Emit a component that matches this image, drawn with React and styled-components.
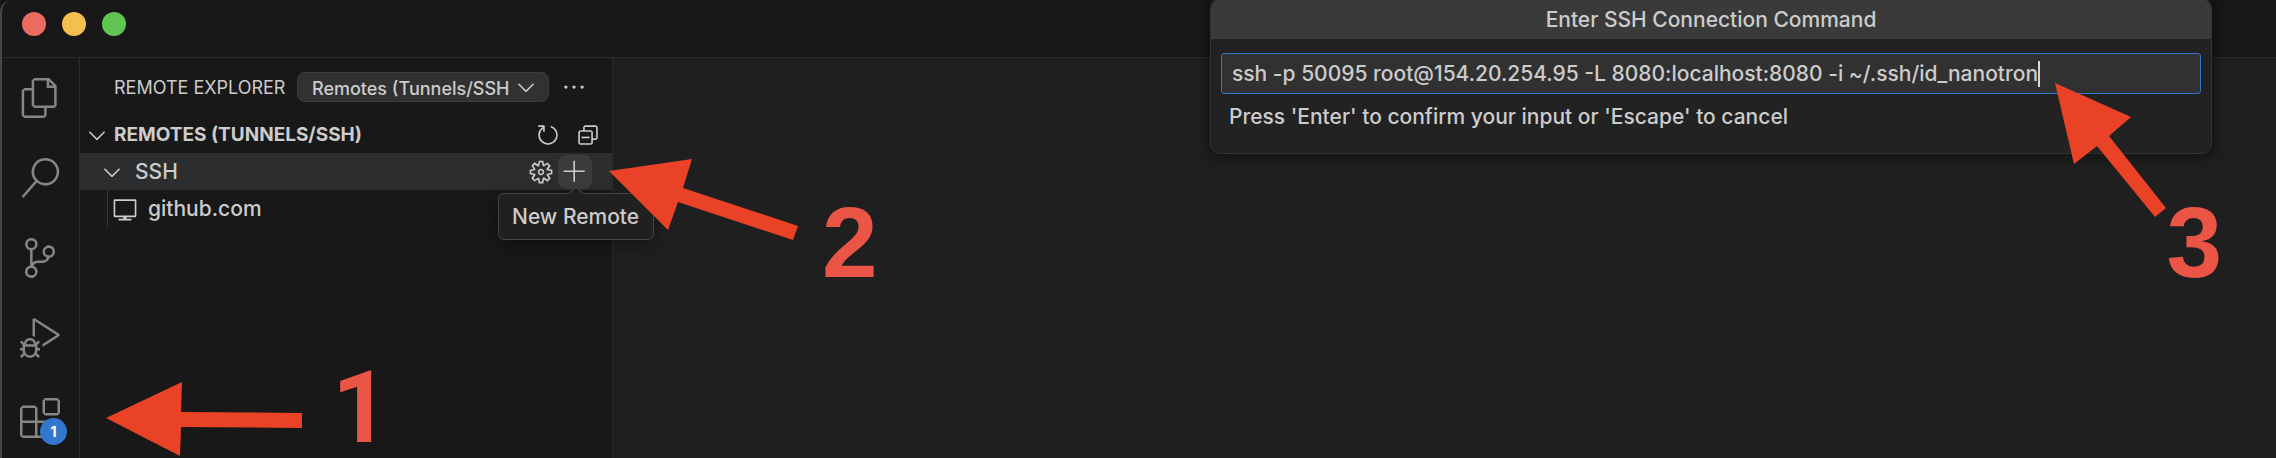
import React from 'react';
import styled, { createGlobalStyle } from 'styled-components';
import {
  VscFiles, VscSearch, VscSourceControl, VscDebugAlt, VscExtensions, VscRefresh,
  VscCollapseAll, VscGear, VscAdd, VscVm, VscChevronDown, VscEllipsis,
} from 'react-icons/vsc';

const GlobalStyle = createGlobalStyle`
  *, *::before, *::after { box-sizing: border-box; }
  body { margin: 0; background: #181818; }
  button, input, select { font: inherit; color: inherit; }
`;

const Window = styled.div`
  position: relative;
  display: flex;
  flex-direction: column;
  min-height: 100vh;
  overflow: hidden;
  background: #181818;
  color: #cccccc;
  font-family: Inter, 'Open Sans', sans-serif;
  font-size: 21px;
  font-weight: 500;
  line-height: 28px;
  border-left: 2px solid #464646;
  border-top-left-radius: 12px;
`;

const TitleBar = styled.header`
  display: flex;
  gap: 16px;
  height: 58px;
  padding: 12px 20px;
  border-bottom: 1px solid #2b2b2b;
`;

const TrafficLight = styled.button`
  width: 24px;
  height: 24px;
  padding: 0;
  border: 0;
  border-radius: 50%;
  background: ${(p) => p.$color};
`;

const Workbench = styled.div`
  flex: 1;
  display: flex;
`;

const ActivityBar = styled.nav`
  display: flex;
  flex-direction: column;
  flex: 0 0 78px;
  border-right: 1px solid #2b2b2b;
`;

const ActivityButton = styled.button`
  position: relative;
  display: flex;
  align-items: center;
  justify-content: center;
  width: 76px;
  height: 80px;
  padding: 0;
  border: 0;
  background: none;
  color: #868686;
  font-size: 40px;
`;

const Badge = styled.span`
  position: absolute;
  right: 11px;
  bottom: 13px;
  width: 27px;
  height: 27px;
  border-radius: 50%;
  background: #3376cd;
  color: #ffffff;
  font-size: 15px;
  font-weight: 700;
  line-height: 27px;
  text-align: center;
`;

const Sidebar = styled.aside`
  flex: 0 0 533px;
  border-right: 1px solid #2b2b2b;
`;

const SidebarHeader = styled.div`
  display: flex;
  align-items: center;
  height: 58px;
  padding-left: 34px;
`;

const SidebarTitle = styled.h1`
  flex: 0 0 183px;
  margin: 0;
  padding-top: 2px;
  font-size: 18px;
  font-weight: 400;
  white-space: nowrap;
`;

const SelectBox = styled.label`
  position: relative;
  flex: 0 0 252px;
  display: flex;
  align-items: center;
`;

const ViewSelect = styled.select`
  appearance: none;
  width: 100%;
  height: 30px;
  padding: 2px 36px 0 14px;
  border: 1px solid #3c3c3c;
  border-radius: 8px;
  background: #313131;
  font-size: 18px;
`;

const SelectArrow = styled.span`
  position: absolute;
  right: 10px;
  display: flex;
  font-size: 26px;
  pointer-events: none;
`;

const IconButton = styled.button`
  display: flex;
  align-items: center;
  justify-content: center;
  width: 34px;
  height: 34px;
  padding: 0;
  border: 0;
  border-radius: 8px;
  background: ${(p) => (p.$active ? '#3a3b3d' : 'none')};
  font-size: 26px;
`;

const MoreButton = styled(IconButton)`
  margin-left: 8px;
`;

const Row = styled.div`
  display: flex;
  align-items: center;
  height: 37px;
  padding-left: ${(p) => p.$indent}px;
  padding-right: ${(p) => p.$end || 0}px;
  background: ${(p) => (p.$hover ? '#2b2d2f' : 'none')};
`;

const Twisty = styled.span`
  display: flex;
  flex: 0 0 ${(p) => p.$width}px;
  font-size: 26px;
`;

const SectionTitle = styled.h2`
  flex: 1;
  margin: 0;
  font-size: 19px;
  font-weight: 700;
`;

const RowLabel = styled.span`
  flex: 1;
`;

const Actions = styled.div`
  display: flex;
  gap: ${(p) => p.$gap || 0}px;
`;

const TipAnchor = styled.div`
  position: relative;
`;

const Tooltip = styled.div`
  position: absolute;
  z-index: 2;
  top: 38px;
  left: -60px;
  padding: 9px 14px 9px 13px;
  height: 47px;
  border: 1px solid #454545;
  border-radius: 6px;
  background: #202020;
  box-shadow: 0 4px 16px rgba(0, 0, 0, 0.36);
  white-space: nowrap;

  &::before {
    content: '';
    position: absolute;
    top: -6px;
    left: 72px;
    width: 10px;
    height: 10px;
    border-top: 1px solid #454545;
    border-left: 1px solid #454545;
    background: #202020;
    transform: rotate(45deg);
  }
`;

const Children = styled.div`
  margin-left: 27px;
  border-left: 1px solid #383838;
`;

const Editor = styled.main`
  flex: 1;
  background: #1f1f1f;
`;

const QuickInput = styled.section`
  position: absolute;
  z-index: 1;
  top: -2px;
  right: 64px;
  width: 1002px;
  max-width: 90%;
  height: 156px;
  border: 1px solid #323232;
  border-radius: 10px;
  background: #222222;
  box-shadow: 0 0 14px 3px rgba(0, 0, 0, 0.4);
`;

const QuickTitle = styled.h2`
  margin: 0;
  height: 40px;
  padding-top: 7px;
  border-radius: 10px 10px 0 0;
  background: #3a3a3a;
  font-size: 21px;
  font-weight: 500;
  text-align: center;
`;

const CommandBox = styled.label`
  display: flex;
  align-items: center;
  height: 41px;
  margin: 14px 10px 0;
  padding-left: 10px;
  border: 1px solid #3376cd;
  border-radius: 3px;
  background: #313131;
`;

const CommandInput = styled.input`
  field-sizing: content;
  padding: 0;
  border: 0;
  outline: 0;
  background: none;
`;

const Caret = styled.span`
  width: 2px;
  height: 26px;
  background: #d8d8d8;
`;

const Hint = styled.p`
  margin: 9px 18px;
`;

const Arrow = styled.svg`
  position: absolute;
  z-index: 3;
  top: ${(p) => p.$top}px;
  ${(p) => (p.$right !== undefined ? `right: ${p.$right}px;` : `left: ${p.$left}px;`)}
  fill: #ea4227;
`;

const StepNumber = styled.span`
  position: absolute;
  z-index: 3;
  top: ${(p) => p.$top}px;
  ${(p) => (p.$right !== undefined ? `right: ${p.$right}px;` : `left: ${p.$left}px;`)}
  color: #eb5545;
  font-family: ${(p) => p.$font || "'Liberation Sans'"}, sans-serif;
  font-size: 100px;
  font-weight: 700;
  line-height: 80px;
`;

const activities = [
  ['Explorer', VscFiles],
  ['Search', VscSearch],
  ['Source Control', VscSourceControl],
  ['Run and Debug', VscDebugAlt],
  ['Extensions', VscExtensions, 1],
];

export default function App() {
  return (
    <>
      <GlobalStyle />
      <Window>
        <TitleBar>
          <TrafficLight $color="#ed6a5e" aria-label="Close" />
          <TrafficLight $color="#f5bf4f" aria-label="Minimize" />
          <TrafficLight $color="#61c554" aria-label="Zoom" />
        </TitleBar>
        <Workbench>
          <ActivityBar>
            {activities.map(([name, Icon, count]) => (
              <ActivityButton key={name} aria-label={name}>
                <Icon />
                {count && <Badge>{count}</Badge>}
              </ActivityButton>
            ))}
          </ActivityBar>
          <Sidebar>
            <SidebarHeader>
              <SidebarTitle>REMOTE EXPLORER</SidebarTitle>
              <SelectBox>
                <ViewSelect aria-label="Remote type">
                  <option>Remotes (Tunnels/SSH</option>
                </ViewSelect>
                <SelectArrow><VscChevronDown /></SelectArrow>
              </SelectBox>
              <MoreButton aria-label="More actions"><VscEllipsis /></MoreButton>
            </SidebarHeader>
            <Row $indent={4} $end={7}>
              <Twisty $width={30}><VscChevronDown /></Twisty>
              <SectionTitle>REMOTES (TUNNELS/SSH)</SectionTitle>
              <Actions $gap={6}>
                <IconButton aria-label="Refresh"><VscRefresh /></IconButton>
                <IconButton aria-label="Collapse all"><VscCollapseAll /></IconButton>
              </Actions>
            </Row>
            <Row $indent={19} $end={20} $hover>
              <Twisty $width={36}><VscChevronDown /></Twisty>
              <RowLabel>SSH</RowLabel>
              <Actions>
                <IconButton aria-label="Open SSH config file"><VscGear /></IconButton>
                <TipAnchor>
                  <IconButton $active aria-label="New Remote" aria-describedby="tip"><VscAdd /></IconButton>
                  <Tooltip id="tip" role="tooltip">New Remote</Tooltip>
                </TipAnchor>
              </Actions>
            </Row>
            <Children>
              <Row $indent={4}>
                <Twisty $width={36}><VscVm /></Twisty>
                <RowLabel>github.com</RowLabel>
              </Row>
            </Children>
          </Sidebar>
          <Editor />
        </Workbench>

        <QuickInput>
          <QuickTitle>Enter SSH Connection Command</QuickTitle>
          <CommandBox>
            <CommandInput
              aria-label="SSH connection command"
              defaultValue="ssh -p 50095 root@154.20.254.95 -L 8080:localhost:8080 -i ~/.ssh/id_nanotron"
            />
            <Caret />
          </CommandBox>
          <Hint>Press 'Enter' to confirm your input or 'Escape' to cancel</Hint>
        </QuickInput>

        <Arrow $top={380} $left={104} width="198" height="78" aria-hidden="true">
          <polygon points="0,38 76,2 75,32 196,33 196,48 75,47 74,76" />
        </Arrow>
        <StepNumber $top={368} $left={330} $font="Roboto">1</StepNumber>
        <Arrow $top={158} $left={607} width="192" height="84" aria-hidden="true">
          <polygon points="0,13 83,1 74,30 189,68 184,82 69,44 59,72" />
        </Arrow>
        <StepNumber $top={202} $left={820}>2</StepNumber>
        <Arrow $top={82} $right={108} width="114" height="138" aria-hidden="true">
          <polygon points="1,1 77,35 55,54 112,126 101,135 43,64 20,82" />
        </Arrow>
        <StepNumber $top={202} $right={54}>3</StepNumber>
      </Window>
    </>
  );
}
